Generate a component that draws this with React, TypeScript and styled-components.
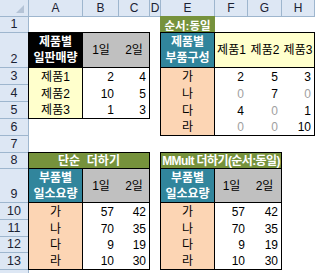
import { Fragment } from 'react';
import styled, { createGlobalStyle } from 'styled-components';

const GlobalStyle = createGlobalStyle`
    html, body {
        margin: 0;
        padding: 0;
        background: #ffffff;
    }
    body {
        font-family: 'Liberation Sans', 'Noto Sans CJK KR', sans-serif;
    }
`;

const Sheet = styled.div`
    display: grid;
    grid-template-columns: 29px 54px 36px 31px 11px 54px 33px 34px 33px;
    grid-template-rows: 17px 16px 35px 17px 17px 17px 17px 17px 16px 34px 17px 17px 16px 17px 17px;
    width: 315px;
    height: 273px;
    overflow: hidden;
    background: #ffffff;
`;

const Corner = styled.div`
    grid-row: 1;
    grid-column: 1;
    position: relative;
    box-sizing: border-box;
    background: #dde7f4;
    border-right: 1px solid #9eb6ce;
    border-bottom: 1px solid #9eb6ce;
`;

const CornerMark = styled.svg`
    position: absolute;
    right: 4px;
    bottom: 3px;
`;

const ColHeader = styled.div<{ $col: number }>`
    grid-row: 1;
    grid-column: ${(p) => p.$col};
    box-sizing: border-box;
    background: #dde7f4;
    border-right: 1px solid #9eb6ce;
    border-bottom: 1px solid #9eb6ce;
    display: flex;
    align-items: center;
    justify-content: center;
    font-size: 12px;
    color: #1b2233;
`;

const RowHeader = styled.div<{ $row: number }>`
    grid-row: ${(p) => p.$row};
    grid-column: 1;
    box-sizing: border-box;
    background: #dde7f4;
    border-right: 1px solid #9eb6ce;
    border-bottom: 1px solid #9eb6ce;
    display: flex;
    align-items: flex-end;
    justify-content: center;
    padding-bottom: 1px;
    font-size: 12.5px;
    line-height: 14px;
    color: #1b2233;
`;

const Label = styled.div<{ $area: string }>`
    grid-area: ${(p) => p.$area};
    margin: -1px 0 0 -1px;
    background: #76923c;
    color: #ffffff;
    font-weight: bold;
    font-size: 11.5px;
    display: flex;
    align-items: center;
    justify-content: center;
`;

const Table = styled.div<{ $area: string; $cols: string; $rows: string }>`
    grid-area: ${(p) => p.$area};
    margin: -1px 0 0 -1px;
    box-sizing: border-box;
    border: 1px solid #000000;
    display: grid;
    grid-template-columns: ${(p) => p.$cols};
    grid-template-rows: ${(p) => p.$rows};
    background: #ffffff;
`;

type Align = 'center' | 'right';

const Cell = styled.div<{
    $bg?: string;
    $color?: string;
    $bold?: boolean;
    $align?: Align;
    $pad?: number;
    $span?: number;
    $br?: boolean;
    $bb?: boolean;
    $tight?: boolean;
}>`
    box-sizing: border-box;
    grid-column: span ${(p) => p.$span || 1};
    background: ${(p) => p.$bg || '#ffffff'};
    color: ${(p) => p.$color || '#000000'};
    font-weight: ${(p) => (p.$bold ? 'bold' : 'normal')};
    font-size: 12px;
    line-height: 16px;
    letter-spacing: ${(p) => (p.$tight ? '-0.6px' : '0')};
    white-space: pre;
    border-right: ${(p) => (p.$br ? '1px solid #000000' : 'none')};
    border-bottom: ${(p) => (p.$bb ? '1px solid #000000' : 'none')};
    display: flex;
    flex-direction: column;
    justify-content: center;
    align-items: ${(p) => (p.$align === 'right' ? 'flex-end' : 'center')};
    padding-right: ${(p) => p.$pad || 0}px;
    overflow: hidden;
`;

const OLIVE = '#76923c';
const TEAL = '#31859c';
const PEACH = '#fcd5b4';
const CREAM = '#ffffcc';
const GRAY = '#c0c0c0';

const PARTS = ['가', '나', '다', '라'];

function Num(props: { v: number; pad: number; dim?: boolean }) {
    return (
        <Cell $align="right" $pad={props.pad} $color={props.dim && props.v === 0 ? '#a0a0a0' : '#000000'}>
            {props.v}
        </Cell>
    );
}

function DemandTable(props: { area: string; title: string; tight?: boolean; pads: number[]; cols: string }) {
    const values = [
        [57, 42],
        [70, 35],
        [9, 19],
        [10, 30],
    ];
    return (
        <Table $area={props.area} $cols={props.cols} $rows="16px 34px 17px 17px 16px 16px">
            <Cell $bg={OLIVE} $color="#ffffff" $bold $span={3} $bb $tight={props.tight}>
                {props.title}
            </Cell>
            <Cell $bg={TEAL} $color="#ffffff" $bold $br $bb>
                <span>부품별</span>
                <span>일소요량</span>
            </Cell>
            <Cell $bg={GRAY} $bb>1일</Cell>
            <Cell $bg={GRAY} $bb>2일</Cell>
            {values.map((row, i) => (
                <Fragment key={i}>
                    <Cell $bg={PEACH} $br>{PARTS[i]}</Cell>
                    <Num v={row[0]} pad={props.pads[0]} />
                    <Num v={row[1]} pad={props.pads[1]} />
                </Fragment>
            ))}
        </Table>
    );
}

export default function App() {
    const cols = ['A', 'B', 'C', 'D', 'E', 'F', 'G', 'H'];
    const rows = [1, 2, 3, 4, 5, 6, 7, 8, 9, 10, 11, 12, 13];
    const sales = [
        [2, 4],
        [10, 5],
        [1, 3],
    ];
    const bom = [
        [2, 5, 3],
        [0, 7, 0],
        [4, 0, 1],
        [0, 0, 10],
    ];

    return (
        <>
            <GlobalStyle />
            <Sheet>
                <Corner>
                    <CornerMark width="8" height="8" viewBox="0 0 8 8">
                        <polygon points="8,0 8,8 0,8" fill="#b4c3d6" />
                    </CornerMark>
                </Corner>
                {cols.map((c, i) => (
                    <ColHeader key={c} $col={i + 2}>{c}</ColHeader>
                ))}
                {rows.map((r, i) => (
                    <RowHeader key={r} $row={i + 2}>{r}</RowHeader>
                ))}
                {/* row 14 is only a sliver at the bottom edge */}
                <RowHeader $row={15} />

                <Table $area="3 / 2 / 7 / 5" $cols="54px 36px 30px" $rows="35px 17px 17px 16px">
                    <Cell $bg="#000000" $color="#ffffff" $bold $br $bb>
                        <span>제품별</span>
                        <span>일판매량</span>
                    </Cell>
                    <Cell $bg={GRAY} $bb>1일</Cell>
                    <Cell $bg={GRAY} $bb>2일</Cell>
                    {sales.map((row, i) => (
                        <Fragment key={i}>
                            <Cell $bg={CREAM} $br>{'제품' + (i + 1)}</Cell>
                            <Num v={row[0]} pad={5} />
                            <Num v={row[1]} pad={3} />
                        </Fragment>
                    ))}
                </Table>

                <Label $area="2 / 6 / 3 / 7">순서:동일</Label>

                <Table $area="3 / 6 / 8 / 10" $cols="54px 33px 34px 32px" $rows="35px 17px 17px 17px 16px">
                    <Cell $bg={TEAL} $color="#ffffff" $bold $br $bb>
                        <span>제품별</span>
                        <span>부품구성</span>
                    </Cell>
                    <Cell $bg={CREAM} $bb>제품1</Cell>
                    <Cell $bg={CREAM} $bb>제품2</Cell>
                    <Cell $bg={CREAM} $bb>제품3</Cell>
                    {bom.map((row, i) => (
                        <Fragment key={i}>
                            <Cell $bg={PEACH} $br>{PARTS[i]}</Cell>
                            <Num v={row[0]} pad={4} dim />
                            <Num v={row[1]} pad={4} dim />
                            <Num v={row[2]} pad={3} dim />
                        </Fragment>
                    ))}
                </Table>

                <DemandTable area="9 / 2 / 15 / 5" title="단순  더하기" pads={[5, 3]} cols="54px 36px 30px" />
                <DemandTable area="9 / 6 / 15 / 9" title="MMult 더하기(순서:동일)" tight pads={[3, 3]} cols="54px 33px 33px" />
            </Sheet>
        </>
    );
}
